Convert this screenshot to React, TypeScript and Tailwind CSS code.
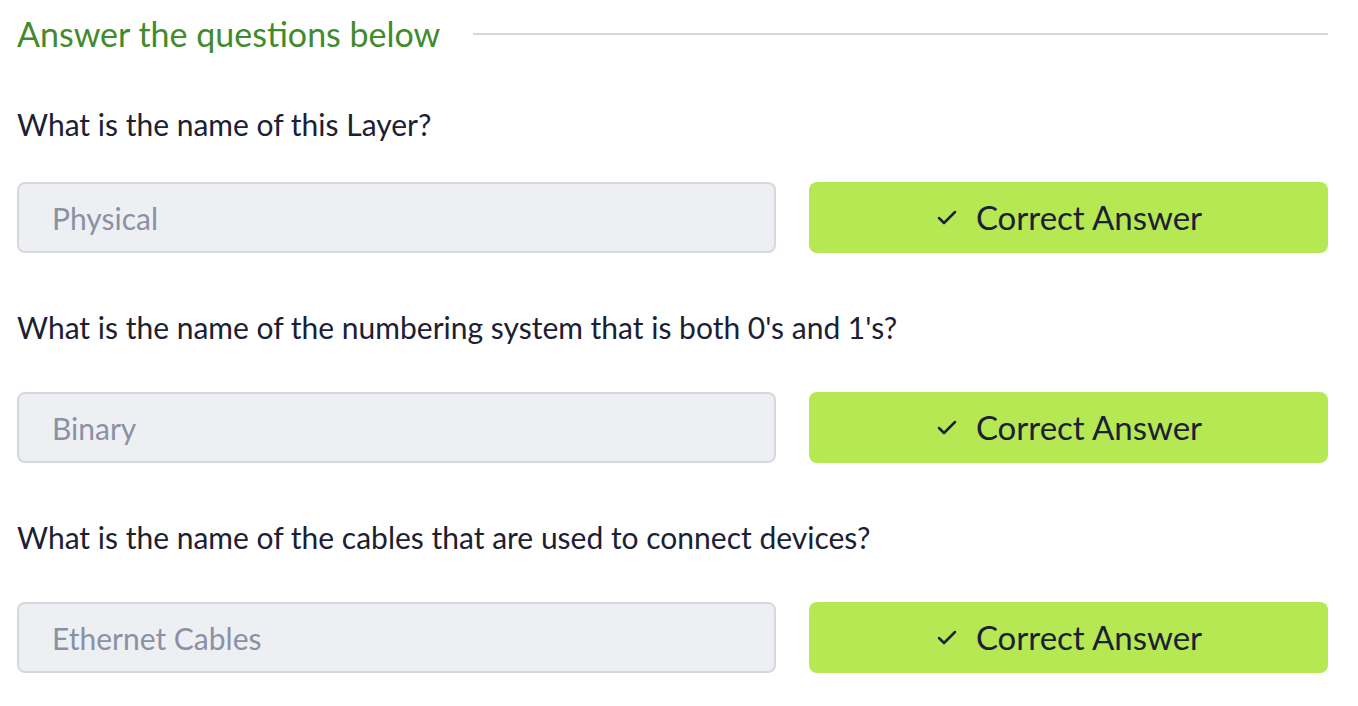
import { Check } from 'lucide-react';

const questions = [
  { q: 'What is the name of this Layer?', a: 'Physical' },
  { q: "What is the name of the numbering system that is both 0's and 1's?", a: 'Binary' },
  { q: 'What is the name of the cables that are used to connect devices?', a: 'Ethernet Cables' },
];

export default function App() {
  return (
    <div className="min-h-screen bg-white pl-[17px] pr-[30px] pt-[13px]" style={{ fontFamily: 'Lato, "Noto Sans", sans-serif' }}>
      <div className="flex items-center gap-[33px]">
        <h2 className="text-[34px] leading-[42px] text-[#428b2c]">Answer the questions below</h2>
        <div className="flex-1 h-[2px] bg-[#d3d6dc]" />
      </div>

      {questions.map((item, i) => (
        <div key={i} className={i === 0 ? 'mt-[51px]' : 'mt-[56px]'}>
          <p className="text-[30px] leading-[36px] text-[#1c2033]">{item.q}</p>
          <div className={`flex gap-[33px] ${i === 0 ? 'mt-[40px]' : 'mt-[47px]'}`}>
            <input
              readOnly
              value={item.a}
              className="w-[759px] h-[71px] rounded-[8px] border-2 border-[#d6d8de] bg-[#eeeff3] px-[33px] text-[30px] text-[#8a91a5] outline-none"
            />
            <button className="flex-1 h-[71px] rounded-[8px] bg-[#b5e853] flex items-center justify-center gap-[17px] text-[33px] text-[#1c2033]">
              <Check className="w-[24px] h-[24px]" strokeWidth={2.5} />
              Correct Answer
            </button>
          </div>
        </div>
      ))}
    </div>
  );
}
